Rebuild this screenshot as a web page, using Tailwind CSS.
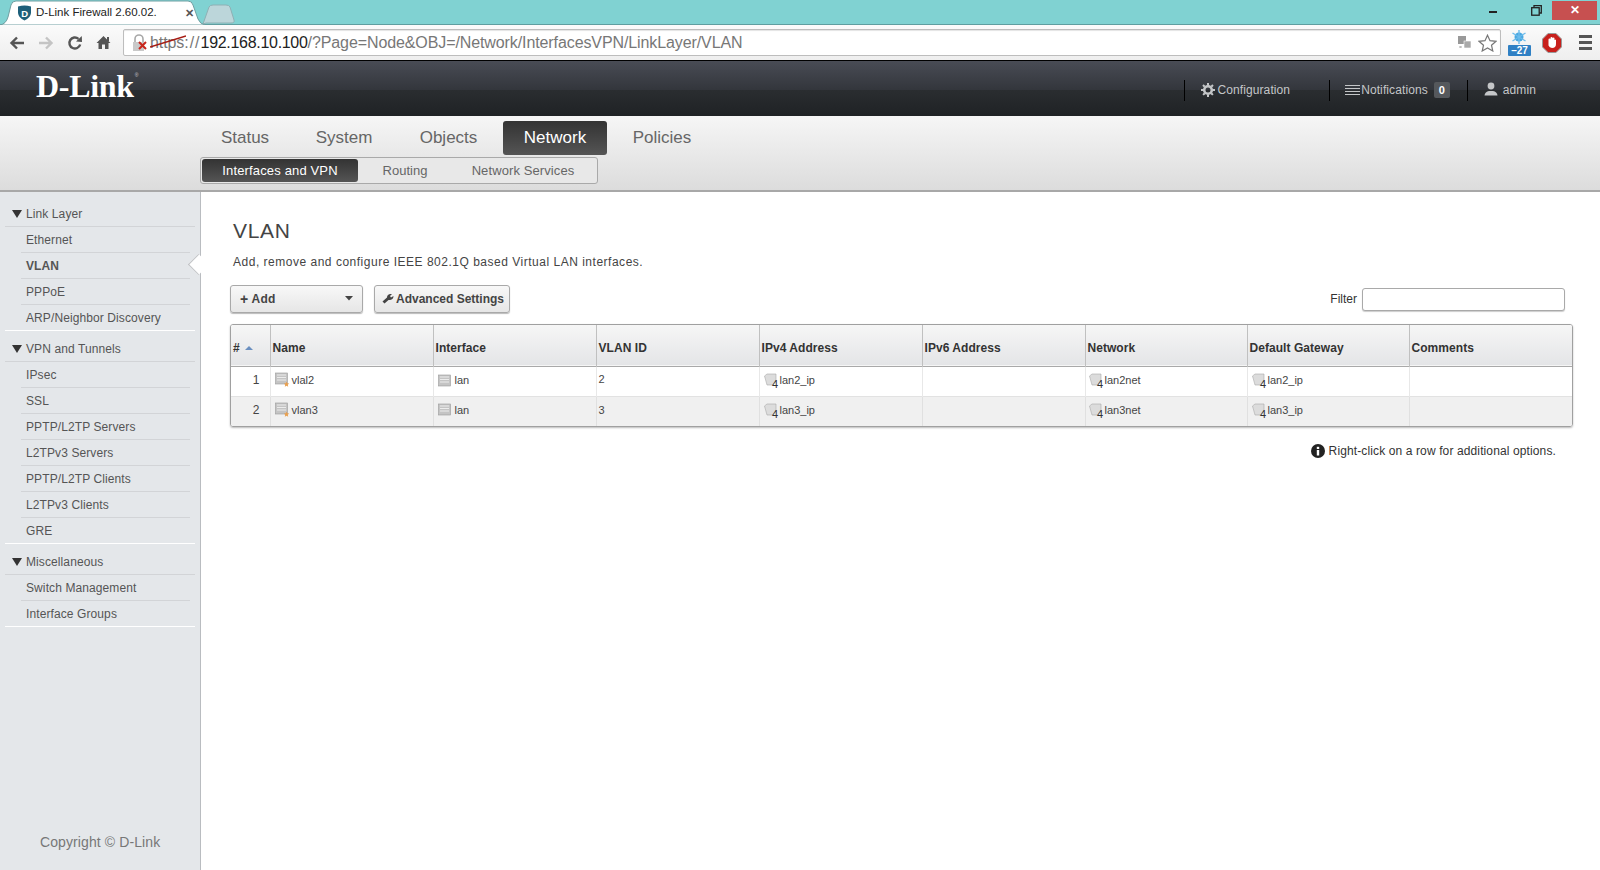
<!DOCTYPE html>
<html lang="en">
<head>
<meta charset="UTF-8">
<title>D-Link Firewall 2.60.02.</title>
<script src="https://cdn.jsdelivr.net/npm/@tailwindcss/browser@4"></script>
</head>
<body class="h-[870px] w-[1600px] overflow-hidden bg-white font-['Liberation_Sans',Arial,sans-serif] text-[12px] text-[#444]">

<!-- browser tab strip -->
<div class="relative flex h-[25px] items-start justify-end border-b border-[#5f9ea0] bg-[#80d2d2]">
  <svg class="absolute left-0 top-0" width="240" height="25" viewBox="0 0 240 25">
    <path d="M203 24 L209 7 Q210 5 213 5 L226 5 Q229 5 230 7 L234 20 Q235 23 231 23 L206 23 Z" fill="#bcd6da" stroke="#8fb0b4"/>
    <path d="M0 25 Q6 24 8 17 L11 5 Q12 1 16 1 L188 1 Q192 1 193 5 L198 19 Q200 24 205 25 Z" fill="#fff" stroke="#6f9fa2"/>
  </svg>
  <div class="absolute left-[17px] top-[3px] flex h-[20px] w-[177px] items-center">
    <svg width="15" height="16" viewBox="0 0 15 16"><path d="M1 1.5 Q7.5 -0.5 14 1.5 L14 8 Q13.5 13 7.5 15.5 Q1.5 13 1 8 Z" fill="#1d5f7a"/><text x="4.2" y="11.5" font-size="9.5" font-weight="700" fill="#fff" font-family="Liberation Sans">D</text></svg>
    <span class="ml-[4px] text-[11.5px] text-[#222]">D-Link Firewall 2.60.02.</span>
    <span class="ml-auto text-[11px] font-bold text-[#555]">✕</span>
  </div>
  <div class="flex items-center">
    <div class="flex h-[20px] w-[27px] items-center justify-center"><div class="mt-[3px] h-[2px] w-[8px] bg-[#222]"></div></div>
    <div class="ml-[17px] flex h-[20px] w-[27px] items-center justify-center">
      <svg width="11" height="11" viewBox="0 0 11 11" fill="none" stroke="#222" stroke-width="1.3"><rect x="0.7" y="2.7" width="7.5" height="7.5"/><path d="M3 2.5 V0.7 H10.3 V8 H8.5"/></svg>
    </div>
    <div class="ml-[2px] mr-[3px] flex h-[19px] w-[45px] items-center justify-center bg-[#c75050] text-[12px] font-bold text-white">✕</div>
  </div>
</div>

<!-- browser toolbar -->
<div class="flex h-[35px] items-center bg-gradient-to-b from-[#fbfbfb] to-[#eeeeee] pl-[9px]">
  <svg width="16" height="14" viewBox="0 0 16 14" fill="none" stroke="#555" stroke-width="2.4"><path d="M15 7 H3 M8 1.5 L2.5 7 L8 12.5"/></svg>
  <svg class="ml-[13px]" width="16" height="14" viewBox="0 0 16 14" fill="none" stroke="#c4c4c4" stroke-width="2.4"><path d="M1 7 H13 M8 1.5 L13.5 7 L8 12.5"/></svg>
  <svg class="ml-[13px]" width="16" height="16" viewBox="0 0 16 16" fill="none"><path d="M13.2 9.5 A5.5 5.5 0 1 1 11.5 3.8" stroke="#555" stroke-width="2.4"/><path d="M9 6.5 L15 7 L14.8 1 Z" fill="#555"/></svg>
  <svg class="ml-[13px]" width="15" height="15" viewBox="0 0 15 15"><path d="M7.5 1 L0.5 8 L2.5 8 L2.5 14 L6 14 L6 9.5 L9 9.5 L9 14 L12.5 14 L12.5 8 L14.5 8 Z" fill="#555"/><rect x="11" y="2" width="2" height="4" fill="#555"/></svg>
  <div class="ml-[12px] flex h-[27px] w-[1378px] items-center rounded-[2px] border border-[#bdbdbd] bg-white pl-[7px] shadow-[inset_0_1px_1px_#e4e4e4]">
    <svg width="19" height="18" viewBox="0 0 19 18"><path d="M4 8 V5 a4 4 0 0 1 8 0 V8" fill="none" stroke="#a8a8a8" stroke-width="1.6"/><rect x="2" y="8" width="11" height="9" fill="#c9c9c9"/><path d="M8 8 L15 15 M15 8 L8 15" stroke="#c8261c" stroke-width="2"/></svg>
    <span class="relative text-[16px] leading-none tracking-[-0.1px] text-[#777]">
      <span class="relative">https<svg class="absolute left-0 top-[-2px]" width="36" height="20" viewBox="0 0 36 20"><path d="M0 15 L36 4" stroke="#a61c14" stroke-width="1.6"/></svg></span><span class="tracking-[1px]">://</span><span class="tracking-[-0.3px] text-[#222]">192.168.10.100</span>/?Page=Node&amp;OBJ=/Network/InterfacesVPN/LinkLayer/VLAN
    </span>
    <svg class="ml-auto" width="15" height="15" viewBox="0 0 15 15"><rect x="1" y="1" width="8" height="8" fill="#999"/><rect x="7" y="6" width="7" height="7" fill="#aaa" stroke="#fff" stroke-width="0.6"/><path d="M2.5 11 l2 2 M4.5 11 l-2 2" stroke="#aaa"/></svg>
    <svg class="ml-[6px] mr-[3px]" width="19" height="18" viewBox="0 0 19 18"><path d="M9.5 1.2 L12 6.7 L18 7.3 L13.5 11.2 L14.8 17 L9.5 14 L4.2 17 L5.5 11.2 L1 7.3 L7 6.7 Z" fill="#fff" stroke="#777" stroke-width="1.2"/></svg>
  </div>
  <div class="relative ml-[7px] h-[26px] w-[24px]">
    <svg class="absolute left-[3px] top-0" width="16" height="15" viewBox="0 0 16 15"><circle cx="8" cy="7" r="4.5" fill="#4aa8e0"/><path d="M8 0 V14 M1.5 3 L14.5 11 M14.5 3 L1.5 11" stroke="#6dbcec" stroke-width="1.4"/></svg>
    <div class="absolute bottom-0 left-0 h-[11px] w-[23px] rounded-[1px] bg-[#2f80c4] text-center text-[10px] font-bold leading-[11px] text-white">–27</div>
  </div>
  <svg class="ml-[10px]" width="20" height="20" viewBox="0 0 20 20"><path d="M6 0.5 H14 L19.5 6 V14 L14 19.5 H6 L0.5 14 V6 Z" fill="#c8201c" stroke="#999"/><path d="M6.5 10 V6.5 a1 1 0 0 1 2 0 V5 a1 1 0 0 1 2 0 V5.5 a1 1 0 0 1 2 0 V7 a1 1 0 0 1 1.5 0 V11 a4 4 0 0 1 -4 4 a4 4 0 0 1 -3.5 -2.5 Z" fill="#fff"/></svg>
  <div class="ml-[17px] flex w-[13px] flex-col gap-[3px]">
    <div class="h-[3px] bg-[#555]"></div><div class="h-[3px] bg-[#555]"></div><div class="h-[3px] bg-[#555]"></div>
  </div>
</div>

<!-- D-Link header -->
<div class="flex h-[56px] items-center border-t border-black bg-[linear-gradient(#494c55_0,#33363c_52%,#2a2d30_53%,#1f2225_100%)]">
  <span class="ml-[36px] mt-[-5px] font-['Liberation_Serif',serif] text-[32px] font-bold leading-none tracking-[-0.3px] text-white">D-Link</span>
  <sup class="mb-[22px] ml-[1px] text-[5px] text-[#ccc]">®</sup>
  <div class="ml-auto mt-[3px] flex h-[22px] items-center text-[#c4c6c8]">
    <div class="h-[21px] w-px bg-black"></div>
    <svg class="ml-[16px]" width="14" height="14" viewBox="0 0 14 14"><circle cx="7" cy="7" r="3.8" fill="none" stroke="#c4c6c8" stroke-width="2.6"/><path d="M7 0 V14 M0 7 H14 M2 2 L12 12 M12 2 L2 12" stroke="#c4c6c8" stroke-width="2" stroke-dasharray="2.4 9.2 2.4"/></svg>
    <span class="ml-[2px] tracking-[0.1px]">Configuration</span>
    <div class="ml-[39px] h-[21px] w-px bg-black"></div>
    <div class="ml-[15px] flex w-[15px] flex-col gap-[2px]"><div class="h-px bg-[#c4c6c8]"></div><div class="h-px bg-[#c4c6c8]"></div><div class="h-px bg-[#c4c6c8]"></div><div class="h-px bg-[#c4c6c8]"></div></div>
    <span class="ml-[1px] tracking-[0.1px]">Notifications</span>
    <div class="ml-[6px] h-[16px] w-[16px] rounded-[2px] bg-[#55585c] text-center text-[11px] font-bold leading-[16px] text-white">0</div>
    <div class="ml-[17px] h-[21px] w-px bg-black"></div>
    <svg class="mb-[3px] ml-[16px]" width="14" height="14" viewBox="0 0 14 14"><circle cx="7" cy="4" r="3.4" fill="#c4c6c8"/><path d="M0.5 13.5 Q1 9.5 5 9 L9 9 Q13 9.5 13.5 13.5 Z" fill="#c4c6c8"/></svg>
    <span class="ml-[5px] mr-[64px] tracking-[0.1px]">admin</span>
  </div>
</div>

<!-- main navigation -->
<div class="h-[76px] border-b-2 border-[#a8a8a8] bg-gradient-to-b from-[#f6f6f6] to-[#dcdcdc] pl-[200px]">
  <div class="flex h-[41px] items-start pt-[5px] text-[17px] text-[#666]">
    <div class="flex h-[34px] w-[90px] items-center justify-center">Status</div>
    <div class="flex h-[34px] w-[108px] items-center justify-center">System</div>
    <div class="mr-[4px] flex h-[34px] w-[101px] items-center justify-center">Objects</div>
    <div class="flex h-[34px] w-[104px] items-center justify-center rounded-[3px] bg-gradient-to-b from-[#333] to-[#555] text-white">Network</div>
    <div class="flex h-[34px] w-[110px] items-center justify-center">Policies</div>
  </div>
  <div class="flex h-[27px] w-[398px] items-center rounded-[3px] border border-[#a9a9a9] bg-[#e8e8e8] p-px text-[13px] text-[#666]">
    <div class="flex h-[23px] w-[156px] items-center justify-center rounded-[3px] bg-gradient-to-b from-[#333] to-[#555] pt-px font-medium tracking-[0.15px] text-white">Interfaces and VPN</div>
    <div class="w-[94px] pt-px text-center">Routing</div>
    <div class="w-[142px] pt-px text-center tracking-[0.1px]">Network Services</div>
  </div>
</div>

<div class="flex h-[678px]">
  <!-- sidebar -->
  <div class="flex w-[201px] shrink-0 flex-col border-r border-[#b9bcc0] bg-[#e4e7ea] pl-[5px] pr-[5px] pt-[5px] tracking-[0.1px] text-[#555]">
    <div class="flex h-[30px] items-center gap-[4px] border-b border-[#d2d4d7] pl-[7px] pt-[4px]"><svg width="10" height="8" viewBox="0 0 10 8"><path d="M0 0 H10 L5 8 Z" fill="#333"/></svg>Link Layer</div>
    <div class="flex h-[26px] items-center"><div class="ml-[16px] flex h-full w-[169px] items-center border-b border-[#d2d4d7] pl-[5px]">Ethernet</div></div>
    <div class="relative flex h-[26px] items-center font-bold"><div class="ml-[16px] flex h-full w-[169px] items-center border-b border-[#d2d4d7] pl-[5px]">VLAN</div>
      <div class="absolute left-[186px] top-[4px] z-10 h-[15px] w-[15px] rotate-45 border-b border-l border-[#c0c2c5] bg-white"></div>
    </div>
    <div class="flex h-[26px] items-center"><div class="ml-[16px] flex h-full w-[169px] items-center border-b border-[#d2d4d7] pl-[5px]">PPPoE</div></div>
    <div class="flex h-[26px] items-center border-b border-white pl-[21px]">ARP/Neighbor Discovery</div>

    <div class="flex h-[31px] items-center gap-[4px] border-b border-[#d2d4d7] pl-[7px] pt-[5px]"><svg width="10" height="8" viewBox="0 0 10 8"><path d="M0 0 H10 L5 8 Z" fill="#333"/></svg>VPN and Tunnels</div>
    <div class="flex h-[26px] items-center"><div class="ml-[16px] flex h-full w-[169px] items-center border-b border-[#d2d4d7] pl-[5px]">IPsec</div></div>
    <div class="flex h-[26px] items-center"><div class="ml-[16px] flex h-full w-[169px] items-center border-b border-[#d2d4d7] pl-[5px]">SSL</div></div>
    <div class="flex h-[26px] items-center"><div class="ml-[16px] flex h-full w-[169px] items-center border-b border-[#d2d4d7] pl-[5px]">PPTP/L2TP Servers</div></div>
    <div class="flex h-[26px] items-center"><div class="ml-[16px] flex h-full w-[169px] items-center border-b border-[#d2d4d7] pl-[5px]">L2TPv3 Servers</div></div>
    <div class="flex h-[26px] items-center"><div class="ml-[16px] flex h-full w-[169px] items-center border-b border-[#d2d4d7] pl-[5px]">PPTP/L2TP Clients</div></div>
    <div class="flex h-[26px] items-center"><div class="ml-[16px] flex h-full w-[169px] items-center border-b border-[#d2d4d7] pl-[5px]">L2TPv3 Clients</div></div>
    <div class="flex h-[26px] items-center border-b border-white pl-[21px]">GRE</div>

    <div class="flex h-[31px] items-center gap-[4px] border-b border-[#d2d4d7] pl-[7px] pt-[5px]"><svg width="10" height="8" viewBox="0 0 10 8"><path d="M0 0 H10 L5 8 Z" fill="#333"/></svg>Miscellaneous</div>
    <div class="flex h-[26px] items-center"><div class="ml-[16px] flex h-full w-[169px] items-center border-b border-[#d2d4d7] pl-[5px]">Switch Management</div></div>
    <div class="flex h-[26px] items-center border-b border-white pl-[21px]">Interface Groups</div>

    <div class="mb-[17px] mt-auto pl-[35px] text-[14px] text-[#777]">Copyright © D-Link</div>
  </div>

  <!-- content -->
  <div class="min-w-0 flex-1 pl-[29px] pr-[27px]">
    <h1 class="ml-[3px] mt-[26px] text-[21px] leading-[26px] tracking-[0.7px] text-[#444]">VLAN</h1>
    <p class="ml-[3px] mt-[11px] text-[12px] leading-[14px] tracking-[0.51px] text-[#444]">Add, remove and configure IEEE 802.1Q based Virtual LAN interfaces.</p>

    <div class="mt-[16px] flex h-[28px] items-center">
      <button class="flex h-[28px] w-[133px] items-center rounded-[3px] border border-[#a9a9a9] bg-gradient-to-b from-[#f8f8f8] to-[#e6e6e6] pb-px pl-[9px] pr-[9px] font-bold tracking-[0.3px] text-[#444] shadow-[0_1px_1px_#bbb]">
        <span class="mr-[3px] text-[14px] leading-none">+</span>Add
        <svg class="ml-auto" width="8" height="5" viewBox="0 0 8 5"><path d="M0 0 H8 L4 4.5 Z" fill="#444"/></svg>
      </button>
      <button class="ml-[11px] flex h-[28px] w-[136px] items-center whitespace-nowrap rounded-[3px] border border-[#a9a9a9] bg-gradient-to-b from-[#f8f8f8] to-[#e6e6e6] pb-px pl-[7px] font-bold text-[#444] shadow-[0_1px_1px_#bbb]">
        <svg class="mr-[2px]" width="12" height="11" viewBox="0 0 12 11"><path d="M0.5 8.5 L5 4.5 Q5 1.5 8 1 L10 1 L8 3 L9 4.5 L11.5 3 Q11.5 6.5 8 7 L6.5 7 L2.5 10.5 Z" fill="#444"/></svg>Advanced Settings
      </button>
      <span class="ml-auto mr-[5px] pb-px text-[#333]">Filter</span>
      <input type="text" class="mr-[8px] h-[23px] w-[203px] rounded-[3px] border border-[#a9a9a9] bg-white shadow-[0_1px_1px_#ccc]">
    </div>

    <div class="mt-[11px] overflow-hidden rounded-[3px] border border-[#a0a0a0] shadow-[0_1px_2px_#bbb]">
      <table class="w-full table-fixed border-collapse text-left">
        <colgroup>
          <col class="w-[39px]"><col class="w-[163px]"><col class="w-[163px]"><col class="w-[163px]"><col class="w-[163px]"><col class="w-[163px]"><col class="w-[162px]"><col class="w-[162px]"><col>
        </colgroup>
        <thead>
          <tr class="h-[41px] border-b border-[#a9a9a9] bg-gradient-to-b from-[#f6f6f6] to-[#e4e5e7] font-bold tracking-[0.05px] text-[#333]">
            <th class="border-r border-[#c0c0c0] pl-[2px] pt-[5px]"><span class="flex items-center gap-[5px]">#<svg width="8" height="4" viewBox="0 0 8 4"><path d="M0 4 L4 0 L8 4 Z" fill="#6a8fc0"/></svg></span></th>
            <th class="border-r border-[#c0c0c0] pl-[2px] pt-[5px]">Name</th>
            <th class="border-r border-[#c0c0c0] pl-[2px] pt-[5px]">Interface</th>
            <th class="border-r border-[#c0c0c0] pl-[2px] pt-[5px]">VLAN ID</th>
            <th class="border-r border-[#c0c0c0] pl-[2px] pt-[5px]">IPv4 Address</th>
            <th class="border-r border-[#c0c0c0] pl-[2px] pt-[5px]">IPv6 Address</th>
            <th class="border-r border-[#c0c0c0] pl-[2px] pt-[5px]">Network</th>
            <th class="border-r border-[#c0c0c0] pl-[2px] pt-[5px]">Default Gateway</th>
            <th class="pl-[2px] pt-[5px]">Comments</th>
          </tr>
        </thead>
        <tbody class="text-[11px] text-[#444]">
          <tr class="h-[30px] border-b border-[#e2e2e2] bg-white">
            <td class="border-r border-[#e8e8e8] pb-[3px] pr-[10px] text-right text-[12px]">1</td>
            <td class="border-r border-[#e8e8e8] pl-[4px]"><div class="flex items-center pb-[2px]"><svg width="15" height="16" viewBox="0 0 15 16"><rect x="0.5" y="1" width="12" height="11" fill="#c4c4c4" stroke="#9a9a9a" stroke-width="0.6"/><path d="M2 3 H11 M2 5.5 H11 M2 8 H11" stroke="#ececec"/><path d="M11.5 9.5 l0.8 1.8 1.9 0.2 -1.4 1.3 0.4 1.9 -1.7 -1 -1.7 1 0.4 -1.9 -1.4 -1.3 1.9 -0.2 Z" fill="#e8a050"/></svg><span class="ml-[2px]">vlal2</span></div></td>
            <td class="border-r border-[#e8e8e8] pl-[4px]"><div class="flex items-center pb-[2px]"><svg width="14" height="13" viewBox="0 0 14 13"><rect x="0.5" y="1" width="12" height="11" fill="#c4c4c4" stroke="#9a9a9a" stroke-width="0.6"/><path d="M2 3 H11 M2 5.5 H11 M2 8 H11" stroke="#ececec"/></svg><span class="ml-[3px]">lan</span></div></td>
            <td class="border-r border-[#e8e8e8] pb-[3px] pl-[2px]">2</td>
            <td class="border-r border-[#e8e8e8] pl-[4px]"><div class="flex items-center pb-[2px]"><svg width="15" height="16" viewBox="0 0 15 16"><path d="M0.5 4 L3 2 L12 2 L12 9 L9 13 L3 13 Z" fill="#dcdcdc" stroke="#aaa" stroke-width="0.6"/><text x="8" y="15.5" font-size="11" fill="#333" font-family="Liberation Sans">4</text></svg><span class="ml-[1px]">lan2_ip</span></div></td>
            <td class="border-r border-[#e8e8e8]"></td>
            <td class="border-r border-[#e8e8e8] pl-[3px]"><div class="flex items-center pb-[2px]"><svg width="15" height="16" viewBox="0 0 15 16"><path d="M0.5 4 L3 2 L12 2 L12 9 L9 13 L3 13 Z" fill="#dcdcdc" stroke="#aaa" stroke-width="0.6"/><text x="8" y="15.5" font-size="11" fill="#333" font-family="Liberation Sans">4</text></svg><span class="ml-[1px]">lan2net</span></div></td>
            <td class="border-r border-[#e8e8e8] pl-[4px]"><div class="flex items-center pb-[2px]"><svg width="15" height="16" viewBox="0 0 15 16"><path d="M0.5 4 L3 2 L12 2 L12 9 L9 13 L3 13 Z" fill="#dcdcdc" stroke="#aaa" stroke-width="0.6"/><text x="8" y="15.5" font-size="11" fill="#333" font-family="Liberation Sans">4</text></svg><span class="ml-[1px]">lan2_ip</span></div></td>
            <td></td>
          </tr>
          <tr class="h-[30px] bg-[#f0f0f0]">
            <td class="border-r border-[#e0e0e0] pb-[3px] pr-[10px] text-right text-[12px]">2</td>
            <td class="border-r border-[#e0e0e0] pl-[4px]"><div class="flex items-center pb-[3px]"><svg width="15" height="16" viewBox="0 0 15 16"><rect x="0.5" y="1" width="12" height="11" fill="#c4c4c4" stroke="#9a9a9a" stroke-width="0.6"/><path d="M2 3 H11 M2 5.5 H11 M2 8 H11" stroke="#ececec"/><path d="M11.5 9.5 l0.8 1.8 1.9 0.2 -1.4 1.3 0.4 1.9 -1.7 -1 -1.7 1 0.4 -1.9 -1.4 -1.3 1.9 -0.2 Z" fill="#e8a050"/></svg><span class="ml-[2px]">vlan3</span></div></td>
            <td class="border-r border-[#e0e0e0] pl-[4px]"><div class="flex items-center pb-[3px]"><svg width="14" height="13" viewBox="0 0 14 13"><rect x="0.5" y="1" width="12" height="11" fill="#c4c4c4" stroke="#9a9a9a" stroke-width="0.6"/><path d="M2 3 H11 M2 5.5 H11 M2 8 H11" stroke="#ececec"/></svg><span class="ml-[3px]">lan</span></div></td>
            <td class="border-r border-[#e0e0e0] pb-[3px] pl-[2px]">3</td>
            <td class="border-r border-[#e0e0e0] pl-[4px]"><div class="flex items-center pb-[3px]"><svg width="15" height="16" viewBox="0 0 15 16"><path d="M0.5 4 L3 2 L12 2 L12 9 L9 13 L3 13 Z" fill="#dcdcdc" stroke="#aaa" stroke-width="0.6"/><text x="8" y="15.5" font-size="11" fill="#333" font-family="Liberation Sans">4</text></svg><span class="ml-[1px]">lan3_ip</span></div></td>
            <td class="border-r border-[#e0e0e0]"></td>
            <td class="border-r border-[#e0e0e0] pl-[3px]"><div class="flex items-center pb-[3px]"><svg width="15" height="16" viewBox="0 0 15 16"><path d="M0.5 4 L3 2 L12 2 L12 9 L9 13 L3 13 Z" fill="#dcdcdc" stroke="#aaa" stroke-width="0.6"/><text x="8" y="15.5" font-size="11" fill="#333" font-family="Liberation Sans">4</text></svg><span class="ml-[1px]">lan3net</span></div></td>
            <td class="border-r border-[#e0e0e0] pl-[4px]"><div class="flex items-center pb-[3px]"><svg width="15" height="16" viewBox="0 0 15 16"><path d="M0.5 4 L3 2 L12 2 L12 9 L9 13 L3 13 Z" fill="#dcdcdc" stroke="#aaa" stroke-width="0.6"/><text x="8" y="15.5" font-size="11" fill="#333" font-family="Liberation Sans">4</text></svg><span class="ml-[1px]">lan3_ip</span></div></td>
            <td></td>
          </tr>
        </tbody>
      </table>
    </div>

    <div class="mr-[17px] mt-[15px] flex items-center justify-end tracking-[0.12px] text-[#333]">
      <svg class="mr-[4px]" width="14" height="14" viewBox="0 0 14 14"><circle cx="7" cy="7" r="7" fill="#222"/><rect x="5.8" y="6" width="2.4" height="5.5" fill="#fff"/><rect x="5.8" y="2.8" width="2.4" height="2.2" fill="#fff"/></svg>
      Right-click on a row for additional options.
    </div>
  </div>
</div>
</body>
</html>
